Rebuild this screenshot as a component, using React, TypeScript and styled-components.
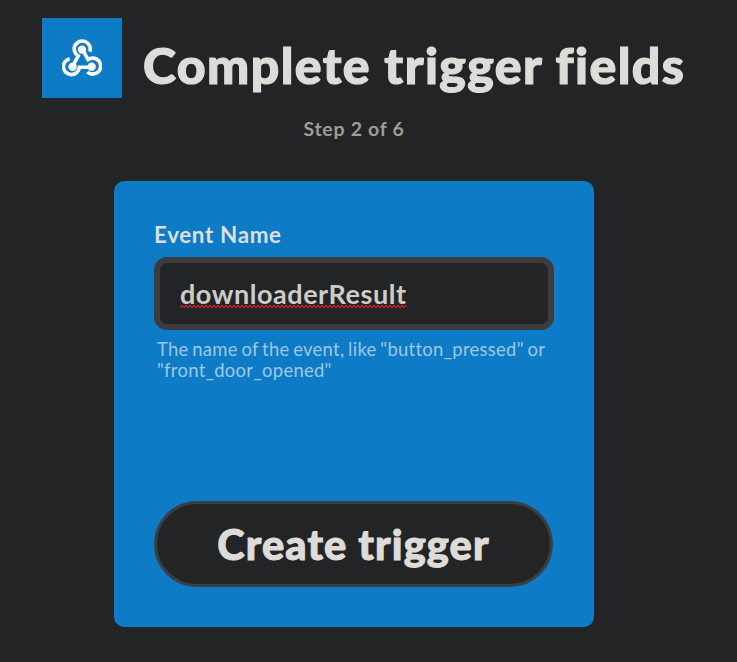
import React, { useState } from "react";
import styled, { createGlobalStyle } from "styled-components";

const GlobalStyle = createGlobalStyle`
  *, *::before, *::after { box-sizing: border-box; }
  body {
    margin: 0;
    background: #232426;
    font-family: Lato, "Open Sans", sans-serif;
  }
`;

const Page = styled.main`
  min-height: 662px;
  padding: 18px 30px 0 42px;
  background: #232426;
`;

const Header = styled.header`
  display: flex;
  height: 80px;
`;

const ServiceTile = styled.div`
  display: flex;
  flex: none;
  align-items: center;
  justify-content: center;
  width: 80px;
  height: 80px;
  background: #0d7bc5;
`;

const Title = styled.h1`
  margin: 17px 0 0 21px;
  color: #dedcd9;
  font-size: 50px;
  font-weight: 900;
  line-height: 60px;
  letter-spacing: 1.42px;
  white-space: nowrap;
  -webkit-text-stroke: 1.2px #dedcd9;
`;

const Step = styled.p`
  width: 480px;
  margin: 17px 0 0 72px;
  color: #a09b94;
  font-size: 19.5px;
  font-weight: 700;
  line-height: 28px;
  letter-spacing: 0.7px;
  text-align: center;
`;

const Card = styled.form`
  display: flex;
  flex-direction: column;
  width: 480px;
  height: 446px;
  margin: 38px 0 0 72px;
  padding: 40px;
  border-radius: 10px;
  background: #0d7bc5;
`;

const Label = styled.label`
  height: 36px;
  color: #dcdfe1;
  font-size: 22.4px;
  font-weight: 700;
  line-height: 28px;
  letter-spacing: 0.65px;
`;

const Field = styled.div`
  display: flex;
  align-items: center;
  height: 73px;
  padding: 0 20px;
  border: 6px solid #3a3c3d;
  border-radius: 13px;
  background: #232426;
`;

const Value = styled.span`
  position: relative;
  color: #cfccc7;
  font-size: 27px;
  font-weight: 700;
  line-height: 34px;
  letter-spacing: 0.55px;
`;

const Squiggle = styled.svg`
  position: absolute;
  left: 0;
  bottom: 3px;
  width: 100%;
  height: 3px;
`;

const Hint = styled.p`
  margin: 9px 0 0 3px;
  color: #9fc8e6;
  font-size: 18.4px;
  line-height: 21px;
  letter-spacing: 0.3px;
  word-spacing: -1.3px;
  white-space: pre;
`;

const Submit = styled.button`
  width: 399px;
  height: 86px;
  margin: auto 0 0;
  padding: 0;
  border: 3px solid #3a3f42;
  border-radius: 43px;
  background: #232426;
  color: #dedcd9;
  font-family: inherit;
  font-size: 41.5px;
  font-weight: 900;
  line-height: 50px;
  letter-spacing: 1.1px;
  -webkit-text-stroke: 1px #dedcd9;
`;

function WebhooksIcon() {
  return (
    <svg width="40" height="38" viewBox="1 1 40 38" fill="none" stroke="#fff" strokeWidth="3.6">
      <path d="M28.8 13.6A8 8 0 1 0 17.2 17.9L11.8 28" />
      <path d="M8.6 20.8A8 8 0 1 0 18.4 29.2H31" />
      <path d="M21 10.5L27 21.6A8 8 0 1 1 26.3 34" />
      <g fill="#fff" stroke="none">
        <circle cx="21" cy="11.6" r="4.2" />
        <circle cx="11.6" cy="28.8" r="4.2" />
        <circle cx="30.6" cy="28.8" r="4.2" />
      </g>
    </svg>
  );
}

function SpellingMark() {
  return (
    <Squiggle aria-hidden="true">
      <defs>
        <pattern id="wave" width="4" height="3" patternUnits="userSpaceOnUse">
          <path d="M-1 1.5L0 2.5L2 0.5L4 2.5L5 1.5" fill="none" stroke="#d3202c" strokeWidth="1.2" />
        </pattern>
      </defs>
      <rect width="100%" height="3" fill="url(#wave)" />
    </Squiggle>
  );
}

export default function App() {
  const [eventName] = useState("downloaderResult");
  return (
    <>
      <GlobalStyle />
      <Page>
        <Header>
          <ServiceTile><WebhooksIcon /></ServiceTile>
          <Title>Complete trigger fields</Title>
        </Header>
        <Step>Step 2 of 6</Step>
        <Card onSubmit={(e) => e.preventDefault()}>
          <Label>Event Name</Label>
          <Field>
            <Value>{eventName}<SpellingMark /></Value>
          </Field>
          <Hint>{'The name of the event, like "button_pressed" or\n"front_door_opened"'}</Hint>
          <Submit>Create trigger</Submit>
        </Card>
      </Page>
    </>
  );
}
